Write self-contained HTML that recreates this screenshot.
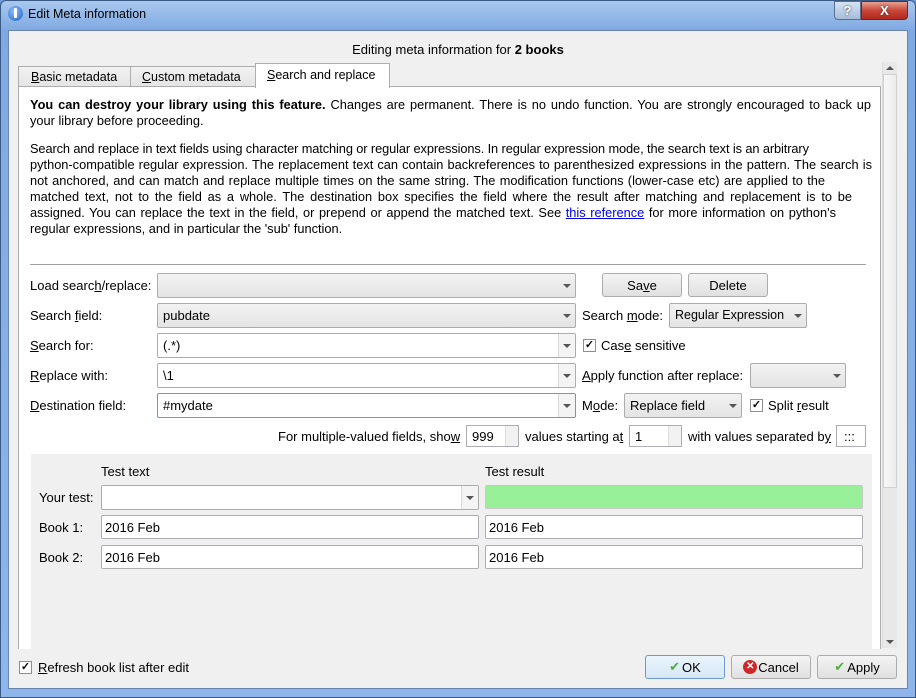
<!DOCTYPE html>
<html><head><meta charset="utf-8"><style>
*{box-sizing:border-box;margin:0;padding:0}
body{width:916px;height:698px;overflow:hidden;font-family:"Liberation Sans",sans-serif;font-size:13px;color:#000;background:#6d9ad8;position:relative}
.a{position:absolute;white-space:nowrap}
.frame{position:absolute;left:0;top:0;width:916px;height:698px;background:linear-gradient(180deg,#a9c8ee 0,#7fa9e2 30px,#8fb6ea 100%);border:1px solid #3a5a86;border-radius:6px 6px 0 0}
.inner{position:absolute;left:8px;top:30px;width:900px;height:659px;background:#f0f0f0;border:1px solid #6a86ad}
.u{text-decoration:underline}
.combo{position:absolute;height:25px;border:1px solid #acacac;border-radius:2px;background:linear-gradient(#f2f2f2,#e4e4e4);padding:4px 5px;white-space:nowrap;overflow:hidden}
.combo.w{background:#fff}
.arr{position:absolute;right:0;top:0;width:16px;height:23px}
.arr:after{content:"";position:absolute;left:4px;top:10px;border-left:4px solid transparent;border-right:4px solid transparent;border-top:4px solid #555}
.combo.w .arr{border-left:1px solid #d8d8d8;background:#f4f4f4;width:17px}
.btn{position:absolute;height:24px;border:1px solid #acacac;border-radius:3px;background:linear-gradient(#f4f4f4,#e0e0e0);display:flex;align-items:center;justify-content:center;white-space:nowrap}
.cb{position:absolute;width:13px;height:13px;border:1px solid #8e8f8f;background:#fff;font-size:11px;line-height:11px;text-align:center;font-weight:bold}
.edit{position:absolute;height:24px;border:1px solid #abadb3;border-radius:2px;background:#fff;padding:4px 3px}
.spin{position:absolute;height:22px;border:1px solid #abadb3;background:#fff;padding:3px 5px}
.spin i{position:absolute;right:0;top:0;width:13px;height:20px;border-left:1px solid #ddd;background:#f2f2f2}
.p div{white-space:nowrap}
.p .j{white-space:normal;text-align:justify;text-align-last:justify;height:16px;overflow:visible}
</style></head><body>
<div class="frame"></div>
<div class="a" style="left:8px;top:6px;width:15px;height:15px;border-radius:50%;background:radial-gradient(circle at 40% 35%,#8fc0ff,#1c5fc4);"></div>
<div class="a" style="left:14px;top:8px;width:3px;height:10px;background:#fff;border-radius:1px"></div>
<div class="a" style="left:28px;top:7px;font-size:12.5px">Edit Meta information</div>
<div class="a" style="left:834px;top:1px;width:27px;height:19px;border:1px solid #5a6f8f;border-radius:0 0 0 4px;background:linear-gradient(#d7e4f4,#a6bcd9);color:#fff;text-align:center;font-weight:bold;font-size:13px;line-height:17px;text-shadow:0 0 2px #333">?</div>
<div class="a" style="left:861px;top:1px;width:47px;height:19px;border:1px solid #6a2a24;border-radius:0 0 4px 0;background:linear-gradient(#e8a090,#c8473a 50%,#b2281c);color:#fff;text-align:center;font-weight:bold;font-size:13px;line-height:17px;text-shadow:0 0 2px #333">X</div>
<div class="inner"></div>
<div class="a" style="left:0;width:916px;top:42px;text-align:center">Editing meta information for <b>2 books</b></div>
<div class="a" style="left:18px;top:66px;width:113px;height:21px;border:1px solid #adadad;border-bottom:none;background:linear-gradient(#f2f2f2,#e4e4e4);padding:3px 12px;font-size:12.5px"><span class="u">B</span>asic metadata</div>
<div class="a" style="left:130px;top:66px;width:126px;height:21px;border:1px solid #adadad;border-bottom:none;background:linear-gradient(#f2f2f2,#e4e4e4);padding:3px 11px;font-size:12.5px"><span class="u">C</span>ustom metadata</div>
<div class="a" style="left:18px;top:86px;width:863px;height:563px;background:#fff;border:1px solid #adadad;border-bottom:none"></div>
<div class="a" style="left:255px;top:63px;width:135px;height:25px;border:1px solid #adadad;border-bottom:none;background:#fff;padding:4px 11px;font-size:12.5px"><span class="u">S</span>earch and replace</div>
<div class="a" style="left:882px;top:62px;width:15px;height:586px;background:#e8e8e8;border-left:1px solid #ddd"></div>
<div class="a" style="left:883px;top:74px;width:14px;height:414px;background:linear-gradient(90deg,#f8f8f8,#ececec);border:1px solid #d0d0d0"></div>
<div class="a" style="left:886px;top:66px;border-left:4px solid transparent;border-right:4px solid transparent;border-bottom:4px solid #555"></div>
<div class="a" style="left:886px;top:640px;border-left:4px solid transparent;border-right:4px solid transparent;border-top:4px solid #555"></div>
<div class="a p" style="left:30px;top:97px;line-height:16px;font-size:12.8px">
<div class="j" style="width:841px"><b>You can destroy your library using this feature.</b> Changes are permanent. There is no undo function. You are strongly encouraged to back up</div>
<div>your library before proceeding.</div>
<div style="height:12px"></div>
<div style="letter-spacing:-0.1px">Search and replace in text fields using character matching or regular expressions. In regular expression mode, the search text is an arbitrary</div>
<div class="j" style="width:842px">python-compatible regular expression. The replacement text can contain backreferences to parenthesized expressions in the pattern. The search is</div>
<div class="j" style="width:795px">not anchored, and can match and replace multiple times on the same string. The modification functions (lower-case etc) are applied to the</div>
<div class="j" style="width:822px">matched text, not to the field as a whole. The destination box specifies the field where the result after matching and replacement is to be</div>
<div class="j" style="width:806px">assigned. You can replace the text in the field, or prepend or append the matched text. See <span style="color:#0000ee;text-decoration:underline">this reference</span> for more information on python's</div>
<div>regular expressions, and in particular the 'sub' function.</div>
</div>
<div class="a" style="left:30px;top:264px;width:836px;height:1px;background:#a0a0a0"></div>
<div class="a" style="left:30px;top:278px">Load searc<span class="u">h</span>/replace:</div>
<div class="combo" style="left:157px;top:273px;width:419px"><span class="arr"></span></div>
<div class="btn" style="left:602px;top:273px;width:80px">Sa<span class="u">v</span>e</div>
<div class="btn" style="left:688px;top:273px;width:80px">Delete</div>
<div class="a" style="left:30px;top:308px">Search <span class="u">f</span>ield:</div>
<div class="combo" style="left:157px;top:303px;width:419px">pubdate<span class="arr"></span></div>
<div class="a" style="left:582px;top:308px">Search <span class="u">m</span>ode:</div>
<div class="combo" style="left:669px;top:303px;width:138px;font-size:12.5px">Regular Expression<span class="arr"></span></div>
<div class="a" style="left:30px;top:338px"><span class="u">S</span>earch for:</div>
<div class="combo w" style="left:157px;top:333px;width:419px">(.*)<span class="arr"></span></div>
<div class="cb" style="left:583px;top:339px">✓</div>
<div class="a" style="left:601px;top:338px">Cas<span class="u">e</span> sensitive</div>
<div class="a" style="left:30px;top:368px"><span class="u">R</span>eplace with:</div>
<div class="combo w" style="left:157px;top:363px;width:419px">\1<span class="arr"></span></div>
<div class="a" style="left:582px;top:368px"><span class="u">A</span>pply function after replace:</div>
<div class="combo" style="left:750px;top:363px;width:96px"><span class="arr"></span></div>
<div class="a" style="left:30px;top:398px"><span class="u">D</span>estination field:</div>
<div class="combo w" style="left:157px;top:393px;width:419px;border-color:#569de5">#mydate<span class="arr"></span></div>
<div class="a" style="left:582px;top:398px">M<span class="u">o</span>de:</div>
<div class="combo" style="left:624px;top:393px;width:118px">Replace field<span class="arr"></span></div>
<div class="cb" style="left:750px;top:399px">✓</div>
<div class="a" style="left:768px;top:398px">Split <span class="u">r</span>esult</div>
<div class="a" style="left:278px;top:429px">For multiple-valued fields, sho<span class="u">w</span></div>
<div class="spin" style="left:466px;top:425px;width:53px">999<i></i></div>
<div class="a" style="left:525px;top:429px">values starting a<span class="u">t</span></div>
<div class="spin" style="left:629px;top:425px;width:53px">1<i></i></div>
<div class="a" style="left:688px;top:429px">with values separated b<span class="u">y</span></div>
<div class="spin" style="left:836px;top:425px;width:30px;padding-left:7px">:::</div>
<div class="a" style="left:31px;top:454px;width:841px;height:195px;background:#f0f0f0"></div>
<div class="a" style="left:101px;top:464px">Test text</div>
<div class="a" style="left:485px;top:464px">Test result</div>
<div class="a" style="left:39px;top:490px">Your test:</div>
<div class="combo w" style="left:101px;top:485px;width:378px"><span class="arr"></span></div>
<div class="a" style="left:485px;top:485px;width:378px;height:24px;background:#98f098;border:1px solid #c8c8c8;border-radius:2px"></div>
<div class="a" style="left:39px;top:520px">Book 1:</div>
<div class="edit" style="left:101px;top:515px;width:378px">2016 Feb</div>
<div class="edit" style="left:485px;top:515px;width:378px">2016 Feb</div>
<div class="a" style="left:39px;top:550px">Book 2:</div>
<div class="edit" style="left:101px;top:545px;width:378px">2016 Feb</div>
<div class="edit" style="left:485px;top:545px;width:378px">2016 Feb</div>
<div class="cb" style="left:19px;top:661px">✓</div>
<div class="a" style="left:38px;top:660px"><span class="u">R</span>efresh book list after edit</div>
<div class="btn" style="left:645px;top:655px;width:80px;border-color:#6a9ad0;background:linear-gradient(#eaf4fc,#d6e8f6)"><span style="color:#4caf3a;margin-right:2px">✔</span>OK</div>
<div class="btn" style="left:731px;top:655px;width:80px"><span style="display:inline-block;width:14px;height:14px;border-radius:50%;background:#d0262a;color:#fff;font-size:10px;line-height:14px;font-weight:bold;text-align:center;margin-right:1px">✕</span>Cancel</div>
<div class="btn" style="left:817px;top:655px;width:80px"><span style="color:#4caf3a;margin-right:2px">✔</span>Apply</div>
</body></html>
